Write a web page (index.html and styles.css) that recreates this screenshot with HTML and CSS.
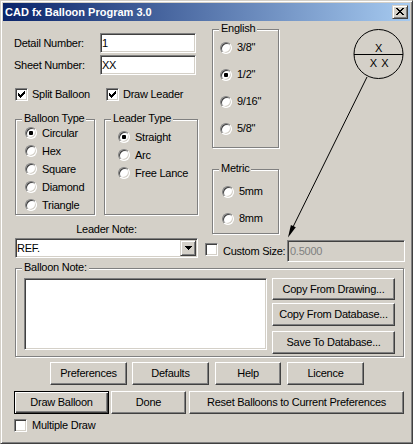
FILE: index.html
```html
<!DOCTYPE html>
<html>
<head>
<meta charset="utf-8">
<link rel="stylesheet" href="styles.css">
</head>
<body>
<div class="window">
  <div class="titlebar">
    <span class="title">CAD fx Balloon Program 3.0</span>
    <span class="close-btn"><svg width="8" height="7" viewBox="0 0 8 7" shape-rendering="crispEdges"><path d="M0 0h2v1h-2z M6 0h2v1h-2z M1 1h2v1h-2z M5 1h2v1h-2z M2 2h4v1h-4z M3 3h2v1h-2z M2 4h4v1h-4z M1 5h2v1h-2z M5 5h2v1h-2z M0 6h2v1h-2z M6 6h2v1h-2z" fill="#000"/></svg></span>
  </div>
  <div class="client">
    <div class="upper">
      <div class="left-col">
        <div class="field-row first"><span class="field-label">Detail Number:</span><span class="input">1</span></div>
        <div class="field-row"><span class="field-label">Sheet Number:</span><span class="input">XX</span></div>
        <div class="check-row">
          <span class="chk chk-split"><span class="checkbox"><svg width="7" height="7" viewBox="0 0 7 7" shape-rendering="crispEdges"><path d="M0 2h1v3h-1z M1 3h1v3h-1z M2 4h1v3h-1z M3 3h1v3h-1z M4 2h1v3h-1z M5 1h1v3h-1z M6 0h1v3h-1z" fill="#000"/></svg></span>Split Balloon</span>
          <span class="chk"><span class="checkbox"><svg width="7" height="7" viewBox="0 0 7 7" shape-rendering="crispEdges"><path d="M0 2h1v3h-1z M1 3h1v3h-1z M2 4h1v3h-1z M3 3h1v3h-1z M4 2h1v3h-1z M5 1h1v3h-1z M6 0h1v3h-1z" fill="#000"/></svg></span>Draw Leader</span>
        </div>
        <div class="groups-row">
          <div class="group g-balloon">
            <span class="legend">Balloon Type</span>
            <div class="radio-row"><span class="radio on"></span>Circular</div>
            <div class="radio-row"><span class="radio"></span>Hex</div>
            <div class="radio-row"><span class="radio"></span>Square</div>
            <div class="radio-row"><span class="radio"></span>Diamond</div>
            <div class="radio-row"><span class="radio"></span>Triangle</div>
          </div>
          <div class="group g-leader">
            <span class="legend">Leader Type</span>
            <div class="radio-row"><span class="radio on"></span>Straight</div>
            <div class="radio-row"><span class="radio"></span>Arc</div>
            <div class="radio-row"><span class="radio"></span>Free Lance</div>
          </div>
        </div>
        <div class="leader-label">Leader Note:</div>
        <div class="combo">
          <span class="combo-text">REF.</span>
          <span class="combo-btn"><svg width="7" height="4" viewBox="0 0 7 4" shape-rendering="crispEdges"><path d="M0 0h7v1h-7z M1 1h5v1h-5z M2 2h3v1h-3z M3 3h1v1h-1z" fill="#000"/></svg></span>
        </div>
      </div>
      <div class="right-col">
        <div class="group g-english">
          <span class="legend">English</span>
          <div class="radio-row tall"><span class="radio"></span>3/8"</div>
          <div class="radio-row tall"><span class="radio on"></span>1/2"</div>
          <div class="radio-row tall"><span class="radio"></span>9/16"</div>
          <div class="radio-row tall"><span class="radio"></span>5/8"</div>
        </div>
        <div class="group g-metric">
          <span class="legend">Metric</span>
          <div class="radio-row tall"><span class="radio"></span>5mm</div>
          <div class="radio-row tall"><span class="radio"></span>8mm</div>
        </div>
        <div class="custom-row">
          <span class="checkbox cb-custom"></span>
          <span class="custom-label">Custom Size:</span>
          <span class="input custom-input">0.5000</span>
        </div>
      </div>
    </div>
    <div class="group g-note">
      <span class="legend">Balloon Note:</span>
      <div class="textarea"></div>
      <div class="note-btns">
        <span class="btn nb1">Copy From Drawing...</span>
        <span class="btn nb2">Copy From Database...</span>
        <span class="btn nb3">Save To Database...</span>
      </div>
    </div>
    <div class="btn-row row-a">
      <span class="btn b-pref">Preferences</span>
      <span class="btn b-def">Defaults</span>
      <span class="btn b-help">Help</span>
      <span class="btn b-lic">Licence</span>
    </div>
    <div class="btn-row row-b">
      <span class="btn default b-draw">Draw Balloon</span>
      <span class="btn b-done">Done</span>
      <span class="btn b-reset">Reset Balloons to Current Preferences</span>
    </div>
    <div class="multi-row">
      <span class="checkbox"></span>Multiple Draw
    </div>
  </div>
  <svg class="drawing" width="413" height="444" viewBox="0 0 413 444">
    <circle cx="378.5" cy="54" r="24.5" fill="none" stroke="#000" stroke-width="1"/>
    <line x1="354" y1="54.5" x2="403" y2="54.5" stroke="#000" stroke-width="1"/>
    <text x="378.5" y="52" text-anchor="middle" class="bt">X</text>
    <text x="379" y="67" text-anchor="middle" class="bt wide">X X</text>
    <line x1="367" y1="77" x2="291" y2="231" stroke="#000" stroke-width="1"/>
    <polygon points="288,237.5 295.8,227.3 290.9,224.9" fill="#000"/>
  </svg>
</div>
</body>
</html>
```
FILE: styles.css
```css
* { box-sizing: border-box; }
html, body { margin: 0; padding: 0; }
body {
  background: #D4D0C8;
  font-family: "Liberation Sans", Arial, sans-serif;
  font-size: 11px;
  letter-spacing: -0.25px;
  color: #000;
}
.window {
  position: relative;
  width: 413px;
  height: 444px;
  border: 1px solid;
  border-color: #D4D0C8 #404040 #404040 #D4D0C8;
  box-shadow: inset 1px 1px #fff, inset -1px -1px #808080;
  padding: 2px;
  background: #D4D0C8;
  overflow: hidden;
}
.titlebar {
  height: 18px;
  background: linear-gradient(to right, #0A246A, #A6CAF0);
  display: flex;
  align-items: center;
  justify-content: space-between;
  padding: 0 2px 0 2px;
}
.title {
  color: #fff;
  font-weight: bold;
  letter-spacing: 0;
  line-height: 13px;
}
.close-btn {
  width: 16px;
  height: 14px;
  background: #D4D0C8;
  border: 1px solid;
  border-color: #D4D0C8 #404040 #404040 #D4D0C8;
  box-shadow: inset 1px 1px #fff, inset -1px -1px #808080;
  display: flex;
  align-items: center;
  justify-content: center;
  padding-bottom: 1px;
}
.close-btn svg { display: block; }
.client { height: 420px; }
.upper { display: flex; }
.left-col { width: 185px; margin-left: 11px; }
.right-col { width: 200px; margin-left: 6px; }

.field-row { display: flex; align-items: center; height: 20px; margin-top: 2px; }
.field-row.first { margin-top: 12px; }
.field-label { width: 86px; line-height: 13px; }
.input {
  display: block;
  width: 96px;
  height: 20px;
  background: #fff;
  border: 1px solid;
  border-color: #808080 #fff #fff #808080;
  box-shadow: inset 1px 1px #404040, inset -1px -1px #D4D0C8;
  padding: 1px;
  line-height: 16px;
  white-space: nowrap;
}

.checkbox {
  width: 13px;
  height: 13px;
  flex: none;
  background: #fff;
  border: 1px solid;
  border-color: #808080 #fff #fff #808080;
  box-shadow: inset 1px 1px #404040, inset -1px -1px #D4D0C8;
  display: flex;
  align-items: center;
  justify-content: center;
}
.checkbox svg { display: block; }
.check-row { display: flex; align-items: center; height: 13px; margin-top: 13px; }
.chk { display: flex; align-items: center; line-height: 13px; }
.chk .checkbox { margin-right: 4px; }
.chk-split { width: 91px; margin-left: 1px; }

.groups-row { display: flex; margin-top: 18px; }
.group {
  position: relative;
  border: 1px solid #808080;
  box-shadow: inset 1px 1px #fff, 1px 1px #fff;
}
.legend {
  position: absolute;
  top: -8px;
  left: 6px;
  padding: 0 2px;
  background: #D4D0C8;
  line-height: 13px;
  white-space: nowrap;
}
.radio-row { display: flex; align-items: center; height: 18px; line-height: 13px; white-space: nowrap; }
.radio-row.tall { height: 27px; }
.radio {
  position: relative;
  width: 12px;
  height: 12px;
  flex: none;
  border-radius: 50%;
  background: #fff;
  border: 1px solid;
  border-color: #808080 #fff #fff #808080;
  box-shadow: inset 1px 1px #404040, inset -1px -1px #D4D0C8;
  margin-right: 5px;
}
.radio.on::after {
  content: "";
  position: absolute;
  left: 3px;
  top: 3px;
  width: 4px;
  height: 4px;
  border-radius: 1px;
  background: #000;
}
.g-balloon { width: 80px; height: 96px; margin-left: 1px; padding: 4px 0 0 9px; }
.g-leader { width: 94px; height: 96px; margin-left: 9px; padding: 8px 0 0 13px; }

.leader-label { margin-top: 8px; height: 13px; line-height: 13px; text-align: center; }
.combo {
  display: flex;
  align-items: center;
  margin-top: 2px;
  margin-left: 1px;
  width: 183px;
  height: 20px;
  background: #fff;
  border: 1px solid;
  border-color: #808080 #fff #fff #808080;
  box-shadow: inset 1px 1px #404040, inset -1px -1px #D4D0C8;
  padding: 1px;
}
.combo-text { flex: 1; line-height: 16px; }
.combo-btn {
  width: 16px;
  height: 16px;
  background: #D4D0C8;
  border: 1px solid;
  border-color: #D4D0C8 #404040 #404040 #D4D0C8;
  box-shadow: inset 1px 1px #fff, inset -1px -1px #808080;
  display: flex;
  align-items: center;
  justify-content: center;
}
.combo-btn svg { display: block; }

.g-english { margin-left: 7px; margin-top: 8px; width: 67px; height: 119px; padding: 4px 0 0 7px; }
.g-metric { margin-left: 7px; margin-top: 21px; width: 67px; height: 65px; padding: 8px 0 0 9px; }
.custom-row { display: flex; align-items: center; margin-top: 6px; height: 22px; }
.cb-custom { align-self: flex-start; margin-top: 3px; margin-right: 5px; }
.custom-label { line-height: 13px; white-space: nowrap; }
.custom-input {
  margin-left: auto;
  width: 118px;
  height: 22px;
  background: #D4D0C8;
  color: #808080;
  line-height: 18px;
  padding: 1px 2px;
}

.g-note {
  display: flex;
  align-items: flex-start;
  margin-left: 12px;
  margin-top: 6px;
  width: 389px;
  height: 89px;
  padding: 9px 0 0 8px;
}
.textarea {
  width: 243px;
  height: 72px;
  background: #fff;
  border: 1px solid;
  border-color: #808080 #fff #fff #808080;
  box-shadow: inset 1px 1px #404040, inset -1px -1px #D4D0C8;
}
.note-btns { display: flex; flex-direction: column; margin-left: 5px; }
.btn {
  display: flex;
  align-items: center;
  justify-content: center;
  height: 23px;
  background: #D4D0C8;
  border: 1px solid;
  border-color: #fff #404040 #404040 #fff;
  box-shadow: inset -1px -1px #808080;
  line-height: 13px;
  white-space: nowrap;
  flex: none;
}
.btn.default {
  border-color: #000;
  box-shadow: inset 1px 1px #fff, inset -1px -1px #404040, inset -2px -2px #808080;
}
.note-btns .btn { width: 123px; }
.nb1 { height: 22px; }
.nb2 { margin-top: 3px; }
.nb3 { margin-top: 5px; }

.btn-row { display: flex; }
.row-a { margin-top: 5px; padding-left: 47px; }
.b-pref { width: 77px; }
.b-def { width: 77px; margin-left: 5px; }
.b-help { width: 66px; margin-left: 6px; }
.b-lic { width: 77px; margin-left: 6px; }
.row-b { margin-top: 6px; padding-left: 11px; }
.b-draw { width: 95px; }
.b-done { width: 75px; margin-left: 2px; }
.b-reset { width: 215px; margin-left: 3px; }

.multi-row { display: flex; align-items: center; margin-top: 5px; padding-left: 11px; height: 13px; line-height: 13px; }
.multi-row .checkbox { margin-right: 5px; }

.drawing { position: absolute; left: -1px; top: -1px; pointer-events: none; }
.bt { font-family: "Liberation Sans", Arial, sans-serif; font-size: 11px; }
.bt.wide { word-spacing: 1.5px; }
```
